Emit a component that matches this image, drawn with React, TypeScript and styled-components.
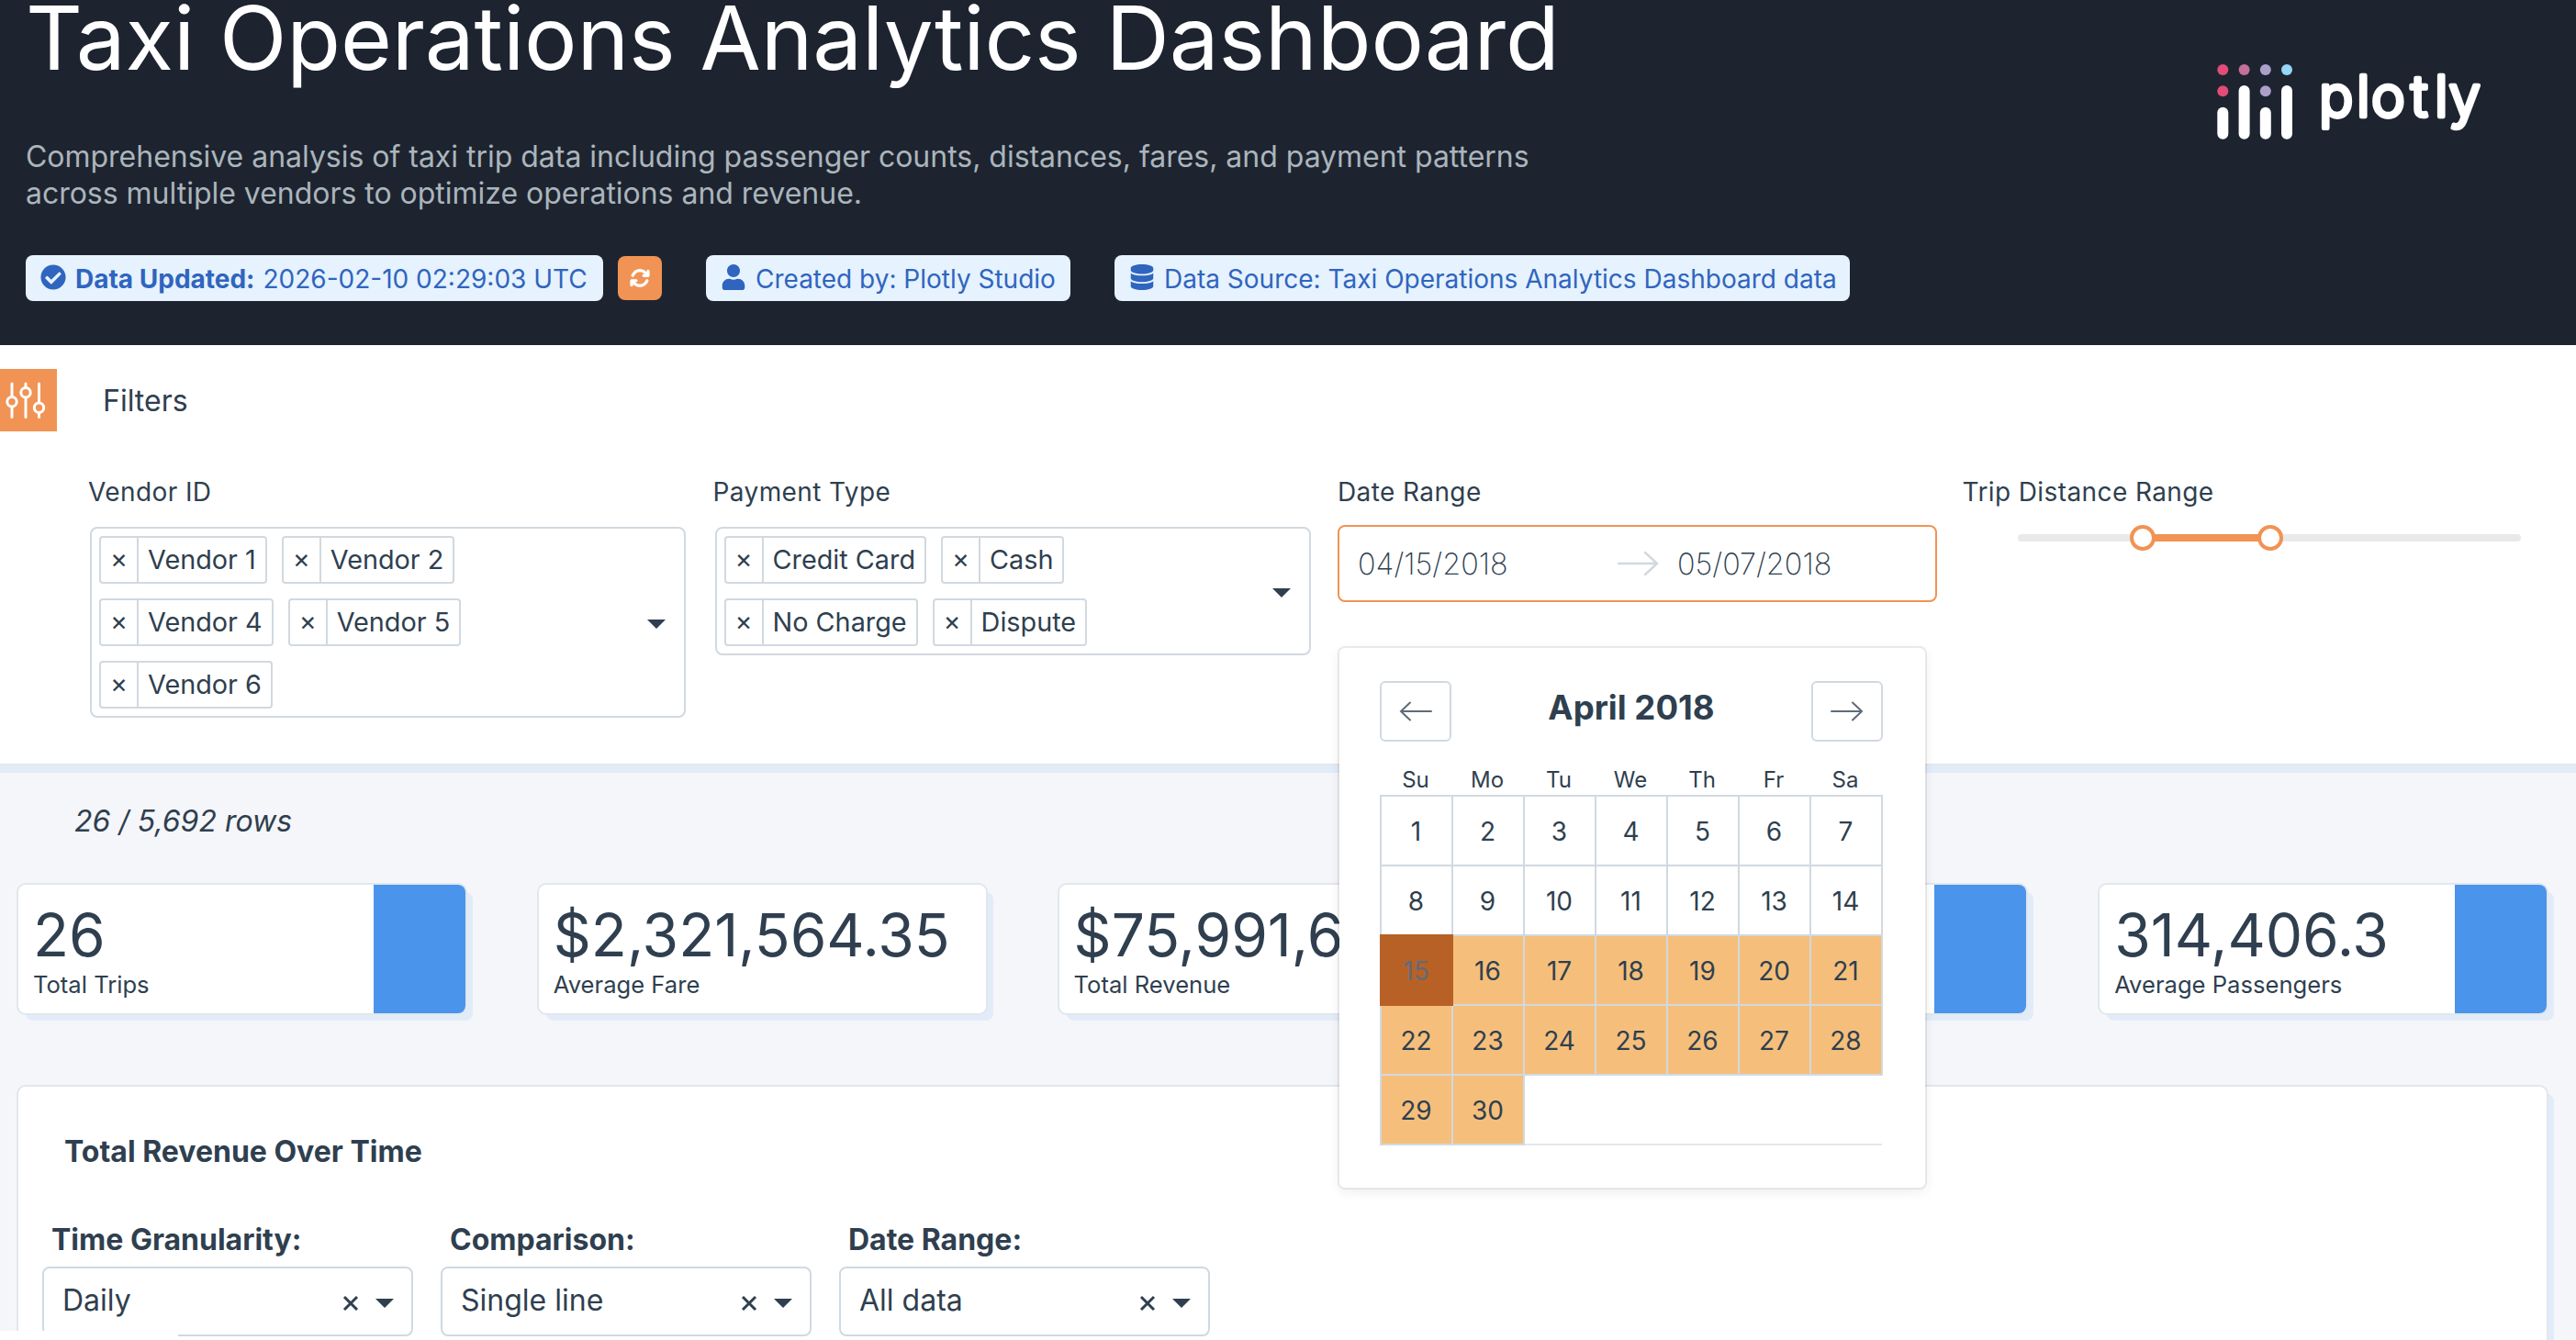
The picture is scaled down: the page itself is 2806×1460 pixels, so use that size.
import React from "react"
import { FaCheckCircle, FaDatabase, FaUser } from "react-icons/fa"
import { FaArrowsRotate } from "react-icons/fa6"
import styled, { createGlobalStyle, css } from "styled-components"

const colors = {
  ink: "#2f3f4f",
  header: "#1d2430",
  orange: "#f19354",
  border: "#d1d9e0",
  softBorder: "#e1e7ec",
  shade: "#e2ecf8",
  page: "#f5f6fa",
  blue: "#4a94ec",
}

const GlobalStyle = createGlobalStyle`
  * {
    box-sizing: border-box;
  }
  body {
    margin: 0;
    overflow: hidden;
    background: ${colors.page};
    color: ${colors.ink};
    font-family: Inter, "Liberation Sans", sans-serif;
    font-size: 32px;
  }
`

const Page = styled.div`
  display: flex;
  flex-direction: column;
  width: 2806px;
  height: 1460px;
  overflow: hidden;
  position: relative;
`

/* Header */

const Header = styled.header`
  display: flex;
  justify-content: space-between;
  flex: none;
  height: 376px;
  padding: 0 98px 0 28px;
  background: ${colors.header};
`

const Title = styled.h1`
  margin: 0;
  color: #fff;
  font-size: 96px;
  font-weight: 400;
  line-height: 82px;
  letter-spacing: -0.11px;
  white-space: nowrap;
`

const Subtitle = styled.p`
  width: 1700px;
  margin: 69px 0 0;
  color: #abb5bb;
  line-height: 40px;
  letter-spacing: -0.02px;
`

const Badges = styled.div`
  display: flex;
  align-items: center;
  margin-top: 47px;
`

const Badge = styled.div<{ $width: number }>`
  display: flex;
  align-items: center;
  width: ${p => p.$width}px;
  height: 50px;
  margin-right: 48px;
  padding-left: 16px;
  border-radius: 8px;
  background: #e6f2fd;
  color: #2f65bf;
  font-size: 28px;
  line-height: 36px;
  white-space: nowrap;

  svg {
    flex: none;
    width: auto;
    height: 28px;
    margin: -2px 10px 0 0;
  }
  b {
    margin-right: 9px;
  }
`

const BadgeText = styled.span`
  margin-top: 2px;
`

const RefreshButton = styled.button`
  display: flex;
  align-items: center;
  justify-content: center;
  width: 48px;
  height: 48px;
  margin: 0 48px 0 -32px;
  padding: 0;
  border: 0;
  border-radius: 8px;
  background: ${colors.orange};
  color: #fff;
  font-size: 22px;

  svg {
    stroke: #fff;
    stroke-width: 14px;
  }
`

const LogoSvg = styled.svg`
  flex: none;
  margin-top: 60px;
`

/* Filters */

const FilterPanel = styled.section`
  flex: none;
  height: 458px;
  padding-top: 26px;
  background: #fff;
  border-bottom: 2px solid ${colors.softBorder};
  box-shadow: 0 8px 0 ${colors.shade};
  position: relative;
  z-index: 1;
`

const FilterHeader = styled.div`
  display: flex;
  align-items: center;
  gap: 50px;
  height: 68px;
`

const FilterToggle = styled.div`
  width: 62px;
  height: 68px;
  background: ${colors.orange};
`

const FilterGrid = styled.div`
  display: grid;
  grid-template-columns: repeat(4, 680.5px);
  padding: 48px 0 0 96px;
`

const FilterLabel = styled.div`
  height: 36px;
  font-size: 28px;
  line-height: 36px;
  letter-spacing: 0.4px;
`

const MultiSelect = styled.div`
  display: flex;
  align-items: center;
  width: 649px;
  margin: 20px 0 0 2px;
  padding: 8px 20px 8px 8px;
  border: 2px solid ${colors.border};
  border-radius: 8px;
`

const Chips = styled.div`
  display: flex;
  flex: 1;
  flex-wrap: wrap;
  gap: 16px;
  padding-right: 100px;
`

const Chip = styled.div`
  display: flex;
  height: 52px;
  border: 2px solid ${colors.border};
  border-radius: 4px;
  font-size: 28.8px;
  line-height: 48px;
`

const ChipRemove = styled.span`
  width: 41px;
  border-right: 2px solid ${colors.border};
  line-height: 46px;
  text-align: center;
`

const ChipText = styled.span`
  padding: 0 10px;
`

const Caret = styled.span`
  flex: none;
  margin-top: 3px;
  border: 10px solid transparent;
  border-top-color: ${colors.ink};
  border-bottom: 0;
`

const DateInput = styled.div`
  display: flex;
  align-items: center;
  width: 653px;
  height: 84px;
  margin-top: 18px;
  padding-left: 20px;
  border: 2px solid ${colors.orange};
  border-radius: 8px;
  font-size: 32.4px;
  font-weight: 200;
`

const DateText = styled.span<{ $width: number }>`
  width: ${p => p.$width}px;
`

const DateArrow = styled.svg`
  margin-right: 20px;
`

const SliderRail = styled.div`
  display: flex;
  align-items: center;
  width: 548px;
  height: 8px;
  margin: 28px 0 0 60px;
  border-radius: 5px;
  background: #e9e9e9;
`

const SliderRange = styled.div`
  display: flex;
  flex: none;
  align-items: center;
  justify-content: space-between;
  width: 167px;
  height: 8px;
  margin-left: 122px;
  background: linear-gradient(${colors.orange}, ${colors.orange}) center / 140px 8px no-repeat;
`

const SliderHandle = styled.span`
  width: 28px;
  height: 28px;
  border: 4px solid ${colors.orange};
  border-radius: 50%;
  background: #fff;
`

/* Calendar */

const Picker = styled.div`
  position: relative;
`

const CalendarPopup = styled.div`
  position: absolute;
  top: 186px;
  left: 0;
  width: 642px;
  height: 592px;
  padding: 36px 44px;
  border: 2px solid rgba(0, 0, 0, 0.08);
  border-radius: 8px;
  background: #fff;
  background-clip: padding-box;
  box-shadow: 0 4px 12px rgba(0, 0, 0, 0.06);
`

const CalendarHeader = styled.div`
  display: flex;
  justify-content: space-between;
  width: 548px;
  height: 66px;
`

const CalendarTitle = styled.strong`
  font-size: 36.6px;
  line-height: 59px;
`

const MonthButton = styled.button`
  display: flex;
  align-items: center;
  justify-content: center;
  width: 78px;
  height: 66px;
  padding: 0;
  border: 2px solid ${colors.border};
  border-radius: 6px;
  background: #fff;
`

const Weekdays = styled.div`
  display: grid;
  grid-template-columns: repeat(7, 78px);
  height: 58px;
  padding-top: 26px;
  font-size: 24px;
  line-height: 32px;
  text-align: center;
`

const Days = styled.div`
  display: grid;
  grid-template-columns: repeat(7, 78px);
  grid-auto-rows: 76px;
  width: 548px;
`

type DayState = "plain" | "span" | "start" | "empty"

const Day = styled.div<{ $state: DayState }>`
  width: 80px;
  height: 78px;
  padding-right: 1px;
  border: 2px solid ${colors.border};
  font-size: 28px;
  line-height: 76px;
  text-align: center;

  ${p =>
    p.$state === "span" &&
    css`
      background: #f5bf7b;
    `}
  ${p =>
    p.$state === "start" &&
    css`
      z-index: 1;
      border-color: #b86126;
      background: #b86126;
      color: #5f6b7a;
    `}
  ${p =>
    p.$state === "empty" &&
    css`
      width: 77px;
      margin-left: 2px;
      border-color: transparent transparent #e4e8eb;
      border-width: 0 0 2px;
    `}
  ${p =>
    p.$state === "empty" &&
    css`
      &:not(:last-child) {
        width: 78px;
      }
    `}
`

/* Summary */

const Summary = styled.main`
  flex: 1;
  padding: 41px 0 0 18px;
`

const RowCount = styled.div`
  height: 40px;
  padding-left: 63px;
  font-style: italic;
  line-height: 40px;
`

const Cards = styled.div`
  display: grid;
  grid-template-columns: repeat(5, 491px);
  column-gap: 75.8px;
  margin-top: 47px;
`

const panel = css`
  border: 2px solid ${colors.softBorder};
  border-radius: 10px;
  background: #fff;
  box-shadow: 8px 8px 0 -2px ${colors.shade};
`

const Card = styled.div`
  ${panel}
  display: flex;
  justify-content: space-between;
  height: 144px;
  overflow: hidden;
`

const CardBody = styled.div`
  padding: 17px 0 0 16px;
`

const CardValue = styled.div`
  font-size: 64px;
  line-height: 76px;
  white-space: nowrap;
`

const CardLabel = styled.div`
  font-size: 25.6px;
  line-height: 32px;
`

const CardAccent = styled.div`
  flex: none;
  width: 100px;
  background: ${colors.blue};
`

const ChartPanel = styled.section`
  ${panel}
  width: 2758px;
  height: 600px;
  margin-top: 76px;
  padding: 51px 0 0 26px;
`

const ChartTitle = styled.h2`
  margin: 0 0 0 24px;
  font-size: 32px;
  line-height: 40px;
`

const ChartControls = styled.div`
  display: flex;
  gap: 30px;
  margin-top: 56px;
`

const ControlLabel = styled.div`
  padding-left: 10px;
  font-weight: 700;
  line-height: 40px;
`

const Select = styled.div`
  display: flex;
  align-items: center;
  width: 404px;
  height: 76px;
  margin-top: 9px;
  padding: 0 19px 0 20px;
  border: 2px solid ${colors.border};
  border-radius: 8px;
`

const SelectValue = styled.span`
  flex: 1;
  margin-top: -4px;
`

const SelectClear = styled.svg`
  margin: 4px 18px 0 0;
`

const SelectCaret = styled(Caret)`
  margin-top: 4px;
`

const StatusBubble = styled.div`
  position: absolute;
  left: 0;
  bottom: 0;
  width: 194px;
  height: 10px;
  border-top-right-radius: 4px;
  background: #fff;
`

const vendors = ["Vendor 1", "Vendor 2", "Vendor 4", "Vendor 5", "Vendor 6"]
const payments = ["Credit Card", "Cash", "No Charge", "Dispute"]
const weekdays = ["Su", "Mo", "Tu", "We", "Th", "Fr", "Sa"]
const days = Array.from({ length: 35 }, (_, i) => i + 1)

const cards = [
  { value: "26", label: "Total Trips", accent: true },
  { value: "$2,321,564.35", label: "Average Fare", accent: false },
  { value: "$75,991,6", label: "Total Revenue", accent: false },
  { value: "", label: "", accent: true },
  { value: "314,406.3", label: "Average Passengers", accent: true },
]

const controls = [
  { label: "Time Granularity:", value: "Daily" },
  { label: "Comparison:", value: "Single line" },
  { label: "Date Range:", value: "All data" },
]

const dayState = (day: number): DayState => {
  if (day > 30) return "empty"
  if (day === 15) return "start"
  return day > 15 ? "span" : "plain"
}

const Logo = () => (
  <LogoSvg width="300" height="100" viewBox="2408 60 300 100">
    <circle cx="2421.3" cy="76" r="6" fill="#e34c78" />
    <circle cx="2444.6" cy="76" r="6" fill="#c3709d" />
    <circle cx="2467.8" cy="76" r="6" fill="#aca0c8" />
    <circle cx="2491" cy="76" r="6" fill="#95d7f5" />
    <circle cx="2421.3" cy="99.2" r="6" fill="#e34c78" />
    <circle cx="2467.8" cy="99.2" r="6" fill="#aca0c8" />
    <g stroke="#fff" strokeWidth="12" strokeLinecap="round">
      <path d="M2421.3 122.7v23" />
      <path d="M2444.6 99v46.7" />
      <path d="M2467.8 122.7v23" />
      <path d="M2491 99v46.7" />
    </g>
    <text
      x="2526 2567 2583 2626 2652 2667.5"
      y="127"
      fill="#fff"
      stroke="#fff"
      strokeWidth="4.5"
      strokeLinejoin="round"
      fontSize="62"
      fontWeight="300"
    >
      plotly
    </text>
  </LogoSvg>
)

const SlidersIcon = () => (
  <svg width="62" height="68" viewBox="0 402 62 68" fill="none" stroke="#fff" strokeWidth="3" strokeLinecap="round">
    <path d="M13 418v14M13 443.500v11M28 418v4M28 433.500v21M42.500 418v20.500M42.500 450v4.500" />
    <circle cx="13" cy="437.7" r="5.2" />
    <circle cx="28" cy="427.7" r="5.2" />
    <circle cx="42.5" cy="444.3" r="5.2" />
  </svg>
)

const Arrow = ({ back = false }: { back?: boolean }) => (
  <svg width="36" height="28" viewBox="0 0 36 28" fill="none" stroke="#5f6b78" strokeWidth="2" strokeLinecap="round">
    <path d={back ? "M35 14H2M12 4.500L2 14l10 9.500" : "M1 14h33M24 4.500l10 9.500-10 9.500"} />
  </svg>
)

const TagSelect = ({ items }: { items: string[] }) => (
  <MultiSelect>
    <Chips>
      {items.map(item => (
        <Chip key={item}>
          <ChipRemove>×</ChipRemove>
          <ChipText>{item}</ChipText>
        </Chip>
      ))}
    </Chips>
    <Caret />
  </MultiSelect>
)

const Calendar = () => (
  <CalendarPopup>
    <CalendarHeader>
      <MonthButton>
        <Arrow back />
      </MonthButton>
      <CalendarTitle>April 2018</CalendarTitle>
      <MonthButton>
        <Arrow />
      </MonthButton>
    </CalendarHeader>
    <Weekdays>
      {weekdays.map(name => (
        <span key={name}>{name}</span>
      ))}
    </Weekdays>
    <Days>
      {days.map(day => (
        <Day key={day} $state={dayState(day)}>
          {day <= 30 && day}
        </Day>
      ))}
    </Days>
  </CalendarPopup>
)

const App = () => (
  <Page>
    <GlobalStyle />
    <Header>
      <div>
        <Title>Taxi Operations Analytics Dashboard</Title>
        <Subtitle>
          Comprehensive analysis of taxi trip data including passenger counts, distances, fares, and payment patterns
          <br />
          across multiple vendors to optimize operations and revenue.
        </Subtitle>
        <Badges>
          <Badge $width={629}>
            <FaCheckCircle />
            <BadgeText>
              <b>Data Updated:</b>2026-02-10 02:29:03 UTC
            </BadgeText>
          </Badge>
          <RefreshButton>
            <FaArrowsRotate />
          </RefreshButton>
          <Badge $width={397}>
            <FaUser />
            <BadgeText>Created by: Plotly Studio</BadgeText>
          </Badge>
          <Badge $width={801}>
            <FaDatabase />
            <BadgeText>Data Source: Taxi Operations Analytics Dashboard data</BadgeText>
          </Badge>
        </Badges>
      </div>
      <Logo />
    </Header>

    <FilterPanel>
      <FilterHeader>
        <FilterToggle>
          <SlidersIcon />
        </FilterToggle>
        Filters
      </FilterHeader>
      <FilterGrid>
        <div>
          <FilterLabel>Vendor ID</FilterLabel>
          <TagSelect items={vendors} />
        </div>
        <div>
          <FilterLabel>Payment Type</FilterLabel>
          <TagSelect items={payments} />
        </div>
        <Picker>
          <FilterLabel>Date Range</FilterLabel>
          <DateInput>
            <DateText $width={282}>04/15/2018</DateText>
            <DateArrow width="46" height="36" viewBox="0 0 46 36" fill="none" stroke={colors.border} strokeWidth="2.5" strokeLinecap="round">
              <path d="M2 18h42M31 6l13 12-13 12" />
            </DateArrow>
            <DateText $width={200}>05/07/2018</DateText>
          </DateInput>
          <Calendar />
        </Picker>
        <div>
          <FilterLabel>Trip Distance Range</FilterLabel>
          <SliderRail>
            <SliderRange>
              <SliderHandle />
              <SliderHandle />
            </SliderRange>
          </SliderRail>
        </div>
      </FilterGrid>
    </FilterPanel>

    <Summary>
      <RowCount>26 / 5,692 rows</RowCount>
      <Cards>
        {cards.map((card, i) => (
          <Card key={i}>
            <CardBody>
              <CardValue>{card.value}</CardValue>
              <CardLabel>{card.label}</CardLabel>
            </CardBody>
            {card.accent && <CardAccent />}
          </Card>
        ))}
      </Cards>
      <ChartPanel>
        <ChartTitle>Total Revenue Over Time</ChartTitle>
        <ChartControls>
          {controls.map(control => (
            <div key={control.label}>
              <ControlLabel>{control.label}</ControlLabel>
              <Select>
                <SelectValue>{control.value}</SelectValue>
                <SelectClear width="18" height="18" viewBox="0 0 18 18" stroke={colors.ink} strokeWidth="3">
                  <path d="M2 2l14 14M16 2L2 16" />
                </SelectClear>
                <SelectCaret />
              </Select>
            </div>
          ))}
        </ChartControls>
      </ChartPanel>
    </Summary>
    <StatusBubble />
  </Page>
)

export default App
